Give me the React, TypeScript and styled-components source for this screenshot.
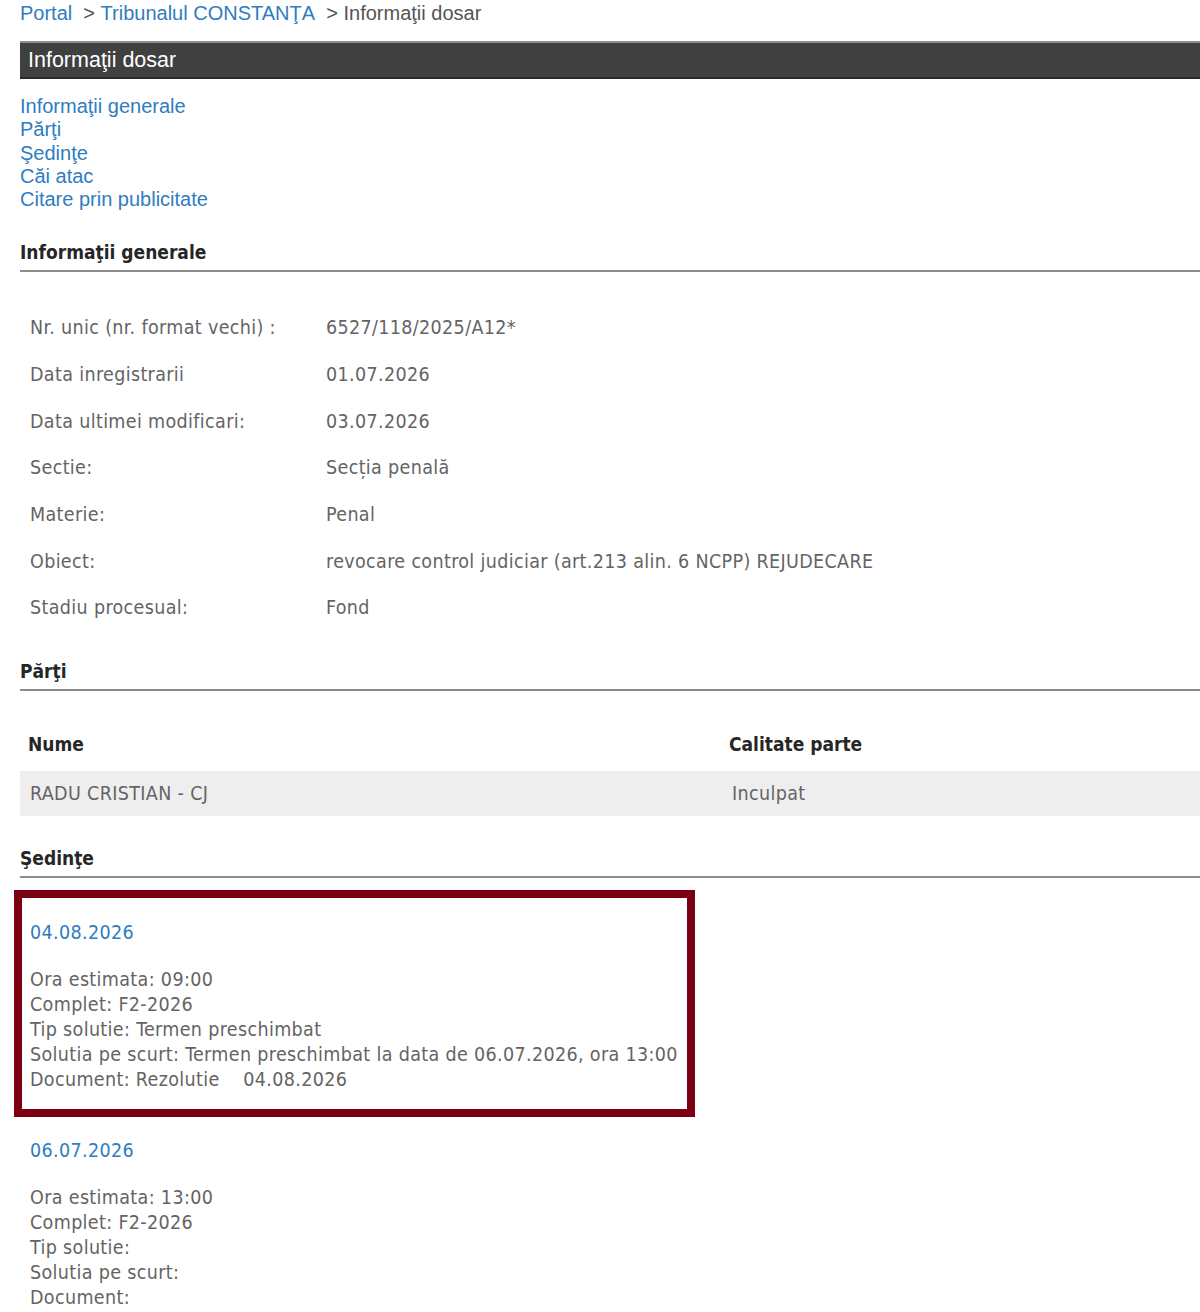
import styled, { createGlobalStyle } from "styled-components";

const GlobalStyle = createGlobalStyle`
    html, body {
        margin: 0;
        padding: 0;
        background: #ffffff;
    }
`;

const Page = styled.div`
    width: 1200px;
    overflow: hidden;
    padding-left: 20px;
    box-sizing: border-box;
    font-family: "DejaVu Sans", sans-serif;
    font-stretch: condensed;
`;

const Breadcrumb = styled.div`
    display: flex;
    height: 27px;
    font-family: "Liberation Sans", Arial, sans-serif;
    font-size: 20px;
    line-height: 26px;
    color: #555555;
    white-space: pre;
`;

const Crumb = styled.a`
    color: #2f7cc1;
    text-decoration: none;
`;

const TitleBar = styled.div`
    height: 34px;
    margin: 14px -20px 0 0;
    padding-left: 8px;
    background: #414040;
    border-top: 2px solid #8f8f8f;
    border-bottom: 2px solid #2b2b2b;
    color: #ffffff;
    font-family: "Liberation Sans", Arial, sans-serif;
    font-size: 21.5px;
    line-height: 34px;
`;

const Nav = styled.nav`
    display: flex;
    flex-direction: column;
    margin-top: 16px;
`;

const NavLink = styled.a`
    color: #2f7cc1;
    font-family: "Liberation Sans", Arial, sans-serif;
    font-size: 20px;
    line-height: 23.3px;
    text-decoration: none;
`;

const SectionTitle = styled.h2<{ $top: number }>`
    margin: ${(p) => p.$top}px -20px 0 0;
    padding-bottom: 6px;
    border-bottom: 2px solid #8c8c8c;
    color: #262626;
    font-size: 19px;
    font-weight: bold;
    line-height: 24px;
`;

const InfoTable = styled.div`
    display: grid;
    grid-template-columns: 296px 1fr;
    grid-auto-rows: 46.67px;
    margin-top: 32px;
    padding-left: 10px;
    color: #646464;
    font-size: 19.5px;
    letter-spacing: 0.35px;
`;

const InfoCell = styled.div`
    display: flex;
    align-items: center;
    white-space: nowrap;
`;

const PartiesHeader = styled.div`
    display: grid;
    grid-template-columns: 701px 1fr;
    height: 49px;
    margin-top: 31px;
    padding: 10px 0 0 8px;
    box-sizing: border-box;
    color: #262626;
    font-size: 19px;
    font-weight: bold;
    line-height: 24px;
`;

const PartiesRow = styled.div`
    display: grid;
    grid-template-columns: 702px 1fr;
    align-items: center;
    height: 45px;
    margin-right: -20px;
    padding-left: 10px;
    background: #eeeeee;
    color: #646464;
    font-size: 19.5px;
    letter-spacing: 0.35px;
`;

const Session = styled.div<{ $highlight?: boolean }>`
    display: flex;
    flex-direction: column;
    width: ${(p) => (p.$highlight ? "657px" : "auto")};
    margin: ${(p) => (p.$highlight ? "12px 0 0 -6px" : "21px 0 0 0")};
    padding: ${(p) => (p.$highlight ? "22px 0 17px 8px" : "0 0 0 10px")};
    border: ${(p) => (p.$highlight ? "8px solid #7a0012" : "none")};
    color: #646464;
    font-size: 19.5px;
    letter-spacing: 0.35px;
    line-height: 25px;
`;

const SessionDate = styled.a`
    margin-bottom: 22px;
    color: #2f7cc1;
    text-decoration: none;
`;

const SessionLine = styled.div`
    white-space: pre;
`;

const info: [string, string][] = [
    ["Nr. unic (nr. format vechi) :", "6527/118/2025/A12*"],
    ["Data inregistrarii", "01.07.2026"],
    ["Data ultimei modificari:", "03.07.2026"],
    ["Sectie:", "Secția penală"],
    ["Materie:", "Penal"],
    ["Obiect:", "revocare control judiciar (art.213 alin. 6 NCPP) REJUDECARE"],
    ["Stadiu procesual:", "Fond"],
];

const sessions = [
    {
        date: "04.08.2026",
        highlight: true,
        lines: [
            "Ora estimata: 09:00",
            "Complet: F2-2026",
            "Tip solutie: Termen preschimbat",
            "Solutia pe scurt: Termen preschimbat la data de 06.07.2026, ora 13:00",
            "Document: Rezolutie    04.08.2026",
        ],
    },
    {
        date: "06.07.2026",
        highlight: false,
        lines: [
            "Ora estimata: 13:00",
            "Complet: F2-2026",
            "Tip solutie:",
            "Solutia pe scurt:",
            "Document:",
        ],
    },
];

function App() {
    return (
        <>
            <GlobalStyle />
            <Page>
                <Breadcrumb>
                    <Crumb href="#">Portal</Crumb>
                    <span>{"  > "}</span>
                    <Crumb href="#">Tribunalul CONSTANŢA</Crumb>
                    <span>{"  > Informaţii dosar"}</span>
                </Breadcrumb>
                <TitleBar>Informaţii dosar</TitleBar>

                <Nav>
                    <NavLink href="#">Informaţii generale</NavLink>
                    <NavLink href="#">Părţi</NavLink>
                    <NavLink href="#">Şedinţe</NavLink>
                    <NavLink href="#">Căi atac</NavLink>
                    <NavLink href="#">Citare prin publicitate</NavLink>
                </Nav>

                <SectionTitle $top={29}>Informaţii generale</SectionTitle>
                <InfoTable>
                    {info.map(([label, value]) => (
                        <>
                            <InfoCell key={label}>{label}</InfoCell>
                            <InfoCell key={label + "-v"}>{value}</InfoCell>
                        </>
                    ))}
                </InfoTable>

                <SectionTitle $top={28}>Părţi</SectionTitle>
                <PartiesHeader>
                    <span>Nume</span>
                    <span>Calitate parte</span>
                </PartiesHeader>
                <PartiesRow>
                    <span>RADU CRISTIAN - CJ</span>
                    <span>Inculpat</span>
                </PartiesRow>

                <SectionTitle $top={30}>Şedinţe</SectionTitle>
                {sessions.map((s) => (
                    <Session key={s.date} $highlight={s.highlight}>
                        <SessionDate href="#">{s.date}</SessionDate>
                        {s.lines.map((line) => (
                            <SessionLine key={line}>{line}</SessionLine>
                        ))}
                    </Session>
                ))}
            </Page>
        </>
    );
}

export default App;
